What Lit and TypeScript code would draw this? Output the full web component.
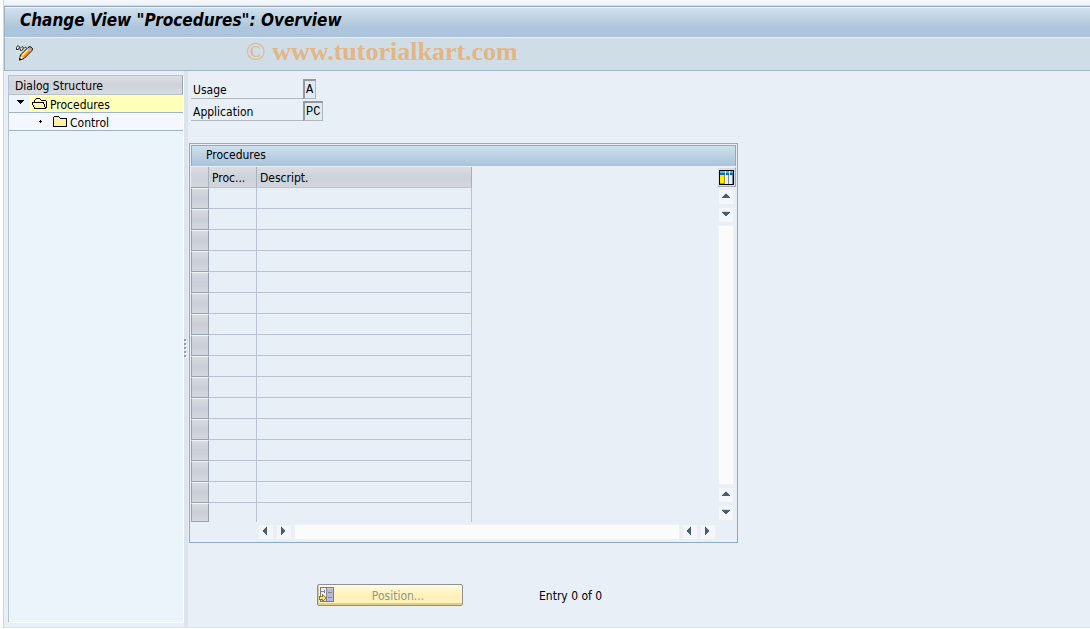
import { LitElement, html, css, svg } from "lit";
import { customElement, state, property } from "lit/decorators.js";
import { classMap } from "lit/directives/class-map.js";

type Dir = "up" | "down" | "left" | "right";

const ARROWS: Record<Dir, string> = {
  up: "M4 9h8v-1h-1v-1h-1v-1h-1v-1h-2v1h-1v1h-1v1h-1z",
  down: "M4 5h8v1h-1v1h-1v1h-1v1h-2v-1h-1v-1h-1v-1h-1z",
  left: "M9 3v8h-1v-1h-1v-1h-1v-1h-1v-2h1v-1h1v-1h1v-1z",
  right: "M5 3v8h1v-1h1v-1h1v-1h1v-2h-1v-1h-1v-1h-1v-1z",
};

@customElement("scroll-button")
export class ScrollButton extends LitElement {
  @property() dir: Dir = "up";

  static styles = css`
    :host { display: block; width: 16px; height: 16px; }
    .btn {
      display: block; width: 16px; height: 16px; padding: 0; box-sizing: border-box;
      border: 1px solid #eaeff5; background: #f3f7fc;
    }
    .icon { display: block; width: 16px; height: 16px; margin: -1px; }
    .halo { fill: #d5dbe2; }
    .tip { fill: #4b5d6e; }
  `;

  render() {
    return html`<button class="btn" type="button" aria-label="Scroll ${this.dir}">
      <svg class="icon" viewBox="0 0 16 16" shape-rendering="crispEdges" aria-hidden="true">
        ${svg`<path class="halo" transform="translate(0 -1)" d=${ARROWS[this.dir]} /><path class="tip" d=${ARROWS[this.dir]} />`}
      </svg>
    </button>`;
  }
}

@customElement("app-root")
export class AppRoot extends LitElement {
  @state() private selected = "Procedures";

  static styles = css`
    :host {
      display: block; box-sizing: border-box; min-height: 100vh; padding-bottom: 1px; background: #fff;
      font-family: "DejaVu Sans Condensed", "DejaVu Sans", sans-serif;
      font-size: 12px; line-height: 16px; color: #000;
    }
    .window {
      display: flex; flex-direction: column; box-sizing: border-box; min-height: calc(100vh - 1px);
      margin-left: 3px; border-left: 1px solid #ccd6e0; border-bottom: 1px solid #e0e5ee; background: #e8eff6;
    }
    .strip { height: 5px; background: linear-gradient(#f4f7fb, #eef3f8); border-bottom: 1px solid #d5dee8; }
    .title {
      margin: 0; padding: 0 15px; height: 30px; line-height: 27px;
      border-top: 1px solid #93a7b9; border-bottom: 1px solid #e9f1f8; border-left: 1px solid #9fb4c9;
      box-shadow: inset 0 1px #e9f1f8;
      background: linear-gradient(#d2e2ef, #b8cddd 50%, #adc6de 66%, #abc2db);
      font-size: 17px; font-weight: bold; font-style: italic;
    }
    .toolbar {
      display: flex; align-items: center; height: 32px; padding-left: 11px;
      border-bottom: 1px solid #a0b4c6; border-left: 1px solid #9fb4c9; background: #cfdde7;
    }
    .tool { display: block; padding: 0; border: 0; background: none; width: 18px; height: 18px; }
    .tool svg { display: block; }
    .mark {
      margin-left: 212px; font-family: "Liberation Serif", serif; font-size: 26px; line-height: 28px;
      color: #e4b585; white-space: pre; align-self: flex-start;
    }
    .body { flex: 1; display: flex; }
    .side {
      width: 176px; box-sizing: border-box; margin: 4px 0 4px 4px; background: #ebf3fb;
      border: 1px solid #b5c2d3; border-right-color: #fff; border-bottom-color: #fff;
    }
    .side-head {
      margin: 0; height: 18px; line-height: 21px; padding-left: 6px; font-size: 12px; font-weight: normal;
      border-right: 1px solid #9aa5b3; border-bottom: 1px solid #b4bfcc;
      background: linear-gradient(#dcdfe2, #ced2d9 50%, #d8dce1);
    }
    .tree { list-style: none; margin: 0; padding: 0; }
    .node { display: flex; height: 17px; border-bottom: 1px solid #9db3ca; background: #f4f8fe; }
    .node.sel { background: #eef4fc; }
    .twist { width: 20px; height: 17px; flex: none; }
    .child .twist { width: 40px; }
    .item {
      flex: 1; display: flex; align-items: center; gap: 2px; padding: 2px 0 0 3px; border: 0;
      background: none; font: inherit; color: inherit; text-align: left;
    }
    .item svg { margin-bottom: 2px; }
    .child .item { padding-left: 4px; }
    .sel .item { background: #ffffb9; }
    .split { width: 4px; background: #dbe5eb; display: flex; align-items: center; justify-content: center; }
    .split svg { display: block; }
    .main { flex: 1; padding: 8px 16px 20px 1px; min-width: 0; }
    .fields { padding-left: 2px; display: flex; flex-direction: column; gap: 2px; }
    .field { display: flex; height: 20px; }
    .field label { width: 110px; padding-left: 2px; height: 19px; line-height: 22px; border-bottom: 1px solid #b4b7bb; }
    .field input {
      box-sizing: border-box; height: 20px; padding: 0 1px; border: 1px solid #b2b5b9; border-top: 2px solid #94989e;
      border-left: 2px solid #94989e; background: #deeaf4; color: #000; outline: 0;
      font-family: "Liberation Mono", monospace; font-size: 12px;
    }
    .w1 { width: 13px; }
    .w2 { width: 20px; }
    .frame { width: 100%; max-width: 549px; box-sizing: border-box; margin-top: 22px; padding: 1px; border: 1px solid #8aabca; }
    .caption {
      margin: 0; height: 20px; line-height: 19px; padding-left: 14px; font-size: 12px; font-weight: normal;
      border-top: 1px solid #94a9be; border-left: 1px solid #94a9be; border-right: 1px solid #94a9be;
      background: linear-gradient(#cfe0ee, #b9cfe0 55%, #a9c4dd);
    }
    .grid { display: grid; grid-template-columns: 1fr 20px; grid-template-rows: 354px 20px; padding-top: 1px; }
    table { border-collapse: separate; border-spacing: 0; table-layout: fixed; width: 281px; align-self: start; }
    th, td { box-sizing: border-box; padding: 0; }
    th {
      height: 21px; font-weight: normal; text-align: left; padding: 2px 0 0 3px; line-height: 18px;
      background: linear-gradient(#dadde0, #cdd1d8 55%, #d3d7dd); border-right: 1px solid #a7b0bc;
      border-bottom: 1px solid #b9c3d1; white-space: nowrap;
    }
    th.first { border-bottom-color: #959eab; }
    td { height: 21px; border-right: 1px solid #b9c3d2; border-bottom: 1px solid #b9c3d2; }
    tr:last-child td { height: 19px; border-bottom: 0; }
    td.head { padding: 0; border: 0; }
    .rowsel {
      display: block; box-sizing: border-box; width: 18px; height: 21px; padding: 0;
      border: 1px solid #98a1ae; border-top-color: #f2f4f7; background: linear-gradient(#d7dbe0, #c9ced7 50%, #d4d8de);
    }
    tr:last-child .rowsel { height: 19px; }
    .c1 { width: 18px; }
    .c2 { width: 48px; }
    .c3 { width: 215px; }
    .vbar { display: flex; flex-direction: column; align-items: center; gap: 2px; }
    .config {
      display: block; box-sizing: border-box; width: 19px; height: 20px; padding: 1px; border: 1px solid #edf0f3;
      border-right-color: #a3a9b1; border-bottom-color: #a3a9b1; background: #d9dee4;
    }
    .config svg { display: block; }
    .track { flex: 1; background: #fbfbfb; border: 1px solid #eef1f5; box-sizing: border-box; }
    .vbar .track { width: 16px; }
    .hbar { display: flex; gap: 2px; padding: 3px 0 0 67px; height: 16px; }
    .foot { display: flex; align-items: center; margin-top: 41px; padding-left: 128px; gap: 76px; }
    .pos {
      display: flex; align-items: center; box-sizing: border-box; width: 146px; height: 22px; padding: 0 1px;
      border: 1px solid #8f9093; border-radius: 2px; color: #93948f; font: inherit;
      background: linear-gradient(#fffbe2, #fff1b8 50%, #fff2bd); box-shadow: inset 0 -2px #e0cd86, inset 1px 0 #d4c898;
    }
    .pos span { flex: 1; text-align: center; }
    .pos span, .entry { padding-top: 2px; }
  `;

  private folder(open: boolean) {
    return open
      ? html`<svg width="16" height="13" viewBox="0 0 16 13" shape-rendering="crispEdges" aria-hidden="true">
          <path fill="#fff7b8" d="M3 2h4v2h7v7H3z" />
          <path fill="none" stroke="#000" d="M2.5 6V3.500L3.500 2.500L4.500 1.500H7.500L9.500 3.500H13.500L14.500 4.500V10.500L13.500 11.500H2.500L.5 6.500V5.500H11.500L13.500 11" />
        </svg>`
      : html`<svg width="15" height="13" viewBox="0 0 15 13" shape-rendering="crispEdges" aria-hidden="true">
          <path fill="#fdf3a0" stroke="#000" d="M.5 11.500V2.500L1.500 1.500H5.500L7.500 3.500H13.500V11.500z" />
          <path stroke="#fffde2" d="M2 3.500H6" />
        </svg>`;
  }

  private node(name: string, child: boolean) {
    const sel = this.selected === name;
    return html`<li class=${classMap({ node: true, sel, child })}>
      <svg class="twist" viewBox=${child ? "0 0 40 17" : "0 0 20 17"} shape-rendering="crispEdges" aria-hidden="true">
        ${child ? svg`<path d="M30 8h3v1h-3zM31 7h1v3h-1z" />` : svg`<path d="M8 5h7v1h-1v1h-1v1h-1v1h-1v-1h-1v-1h-1v-1h-1z" />`}
      </svg>
      <button class="item" type="button" @click=${() => (this.selected = name)}>${this.folder(!child)}${name}</button>
    </li>`;
  }

  render() {
    return html`
      <div class="window">
        <div class="strip"></div>
        <h1 class="title">Change View "Procedures": Overview</h1>
        <div class="toolbar">
          <button class="tool" type="button" aria-label="Display / Change">
            <svg width="18" height="18" viewBox="0 0 18 18" aria-hidden="true">
              <path d="M0.500 4.500V2.500L2 .5L3.500 2L2.500 4.500zM4 3.500L6 1.500L7.500 2.500L6.500 5L4.500 5.500zM8 3.500L9.500 2L10.500 2.500" fill="#eef4f8" stroke="#222" stroke-width="1" />
              <path d="M3.500 15L4.500 10L12 2.500L14 1.500L16.500 3.500L16 5.500L8 13.500z" fill="#f9b233" stroke="#000" />
              <path d="M6 10.500L12 4.500" stroke="#ffe98e" stroke-width="1.500" />
              <path d="M8 12L14 6" stroke="#ed7d21" stroke-width="1.200" />
              <path d="M11.500 3.500L13 2.500L15.500 4.500L14.500 6.500z" fill="#aabbe8" />
              <path d="M13.500 2.500L15.500 4L15 5.200L13 3.500z" fill="#f08a7c" />
              <path d="M4 14.500L4.800 11L7.200 13z" fill="#fff3cf" />
              <path d="M3 15.500L3.800 13L5.500 14.500z" />
            </svg>
          </button>
          <div class="mark">© <b>www.tutorialkart.com</b></div>
        </div>
        <div class="body">
          <nav class="side">
            <h2 class="side-head">Dialog Structure</h2>
            <ul class="tree">${this.node("Procedures", false)}${this.node("Control", true)}</ul>
          </nav>
          <div class="split">
            <svg width="4" height="20" viewBox="0 0 4 20" shape-rendering="crispEdges" aria-hidden="true">
              ${[0, 4, 8, 12, 16].map((y) => svg`<path fill="#fff" d="M1 ${y + 1}h2v2h-2z" /><path fill="#8e9cae" d="M0 ${y}h2v2h-2z" />`)}
            </svg>
          </div>
          <main class="main">
            <div class="fields">
              <div class="field"><label for="usage">Usage</label><input id="usage" class="w1" readonly value="A" /></div>
              <div class="field"><label for="app">Application</label><input id="app" class="w2" readonly value="PC" /></div>
            </div>
            <section class="frame">
              <h2 class="caption">Procedures</h2>
              <div class="grid">
                <table aria-label="Procedures">
                  <colgroup><col class="c1" /><col class="c2" /><col class="c3" /></colgroup>
                  <thead><tr><th class="first"></th><th>Proc...</th><th>Descript.</th></tr></thead>
                  <tbody>
                    ${Array.from({ length: 16 }, (_, i) => html`<tr>
                      <td class="head"><button class="rowsel" type="button" aria-label="Select row ${i + 1}"></button></td><td></td><td></td>
                    </tr>`)}
                  </tbody>
                </table>
                <div class="vbar">
                  <button class="config" type="button" aria-label="Table settings">
                    <svg width="15" height="15" viewBox="0 0 15 15" shape-rendering="crispEdges" aria-hidden="true">
                      <path d="M0 0h15v15H0z" /><path fill="#e9edf6" d="M1 1h13v13H1z" />
                      <path fill="#59b3e8" d="M1 1h13v2H1z" /><path fill="#1268b0" d="M1 3h13v2H1z" />
                      <path fill="#ffeb00" d="M1 5h4v8H1z" /><path fill="#b08d00" d="M5 5h1v9H1v-1h4z" />
                      <path fill="#fff" d="M6 1h1v13H6zM10 1h1v4h-1z" /><path fill="#7c879c" d="M9 5h1v9h-1zM13 5h1v9h-1z" />
                    </svg>
                  </button>
                  <scroll-button dir="up"></scroll-button>
                  <scroll-button dir="down"></scroll-button>
                  <div class="track"></div>
                  <scroll-button dir="up"></scroll-button>
                  <scroll-button dir="down"></scroll-button>
                </div>
                <div class="hbar">
                  <scroll-button dir="left"></scroll-button>
                  <scroll-button dir="right"></scroll-button>
                  <div class="track"></div>
                  <scroll-button dir="left"></scroll-button>
                  <scroll-button dir="right"></scroll-button>
                </div>
              </div>
            </section>
            <div class="foot">
              <button class="pos" type="button">
                <svg width="16" height="16" viewBox="0 0 16 16" shape-rendering="crispEdges" aria-hidden="true">
                  <path fill="#cfd4e4" stroke="#77797f" d="M1.500 .5h13v14h-13z" /><path fill="#eceef3" d="M2 1h5v8H2z" />
                  <path fill="#b4b9d6" d="M8 2h6v12H8z" />
                  <path stroke="#85868c" d="M2 4.500h4M5.500 3v3M9 5.500h4M9 10.500h4M7.500 1v13" />
                  <path fill="#ffe95c" stroke="#857a35" d="M.5 9.500h3v-2l3.500 3.500l-3.500 3.500v-2h-3z" />
                </svg>
                <span>Position...</span>
              </button>
              <span class="entry">Entry 0 of 0</span>
            </div>
          </main>
        </div>
      </div>
    `;
  }
}
